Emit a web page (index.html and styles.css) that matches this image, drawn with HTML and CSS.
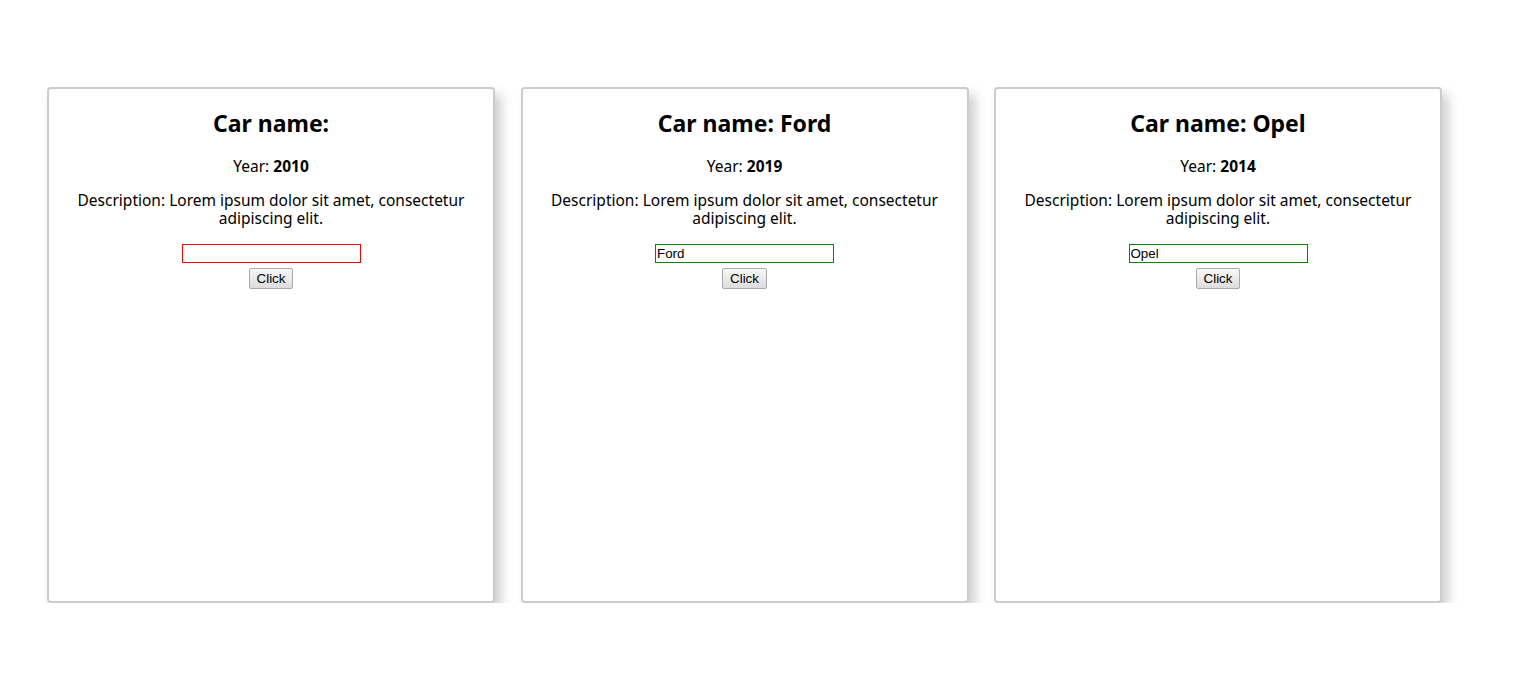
FILE: index.html
```html
<!DOCTYPE html>
<html>
<head>
<meta charset="utf-8">
<link rel="stylesheet" href="styles.css">
</head>
<body>
<div class="cards">
  <div class="card">
    <h2 class="title">Car name: </h2>
    <p class="line">Year: <b>2010</b></p>
    <p class="line">Description: Lorem ipsum dolor sit amet, consectetur adipiscing elit.</p>
    <div class="form">
      <input class="field field-bad" type="text" value="">
      <button class="btn">Click</button>
    </div>
  </div>
  <div class="card">
    <h2 class="title">Car name: Ford</h2>
    <p class="line">Year: <b>2019</b></p>
    <p class="line">Description: Lorem ipsum dolor sit amet, consectetur adipiscing elit.</p>
    <div class="form">
      <input class="field field-ok" type="text" value="Ford">
      <button class="btn">Click</button>
    </div>
  </div>
  <div class="card">
    <h2 class="title">Car name: Opel</h2>
    <p class="line">Year: <b>2014</b></p>
    <p class="line">Description: Lorem ipsum dolor sit amet, consectetur adipiscing elit.</p>
    <div class="form">
      <input class="field field-ok" type="text" value="Opel">
      <button class="btn">Click</button>
    </div>
  </div>
</div>
</body>
</html>
```

FILE: styles.css
```css
html, body {
  margin: 0;
  padding: 0;
  background: #fff;
}
body {
  font-family: "Noto Sans", "DejaVu Sans", sans-serif;
  color: #000;
}
.cards {
  display: flex;
  gap: 25.5px;
  padding: 87px 0 0 47px;
}
.card {
  box-sizing: border-box;
  flex: 0 0 448px;
  height: 516px;
  border: 2px solid #ccc;
  border-radius: 4px;
  box-shadow: 6px 7px 12px rgba(0, 0, 0, 0.2);
  text-align: center;
  padding: 0 24px;
  background: #fff;
}
.title {
  font-size: 23px;
  line-height: 28px;
  font-weight: 700;
  margin: 20px 0 20px;
}
.line {
  font-size: 15.5px;
  line-height: 18px;
  margin: 16px 0;
}
.line b {
  font-weight: 700;
}
.form {
  display: flex;
  flex-direction: column;
  align-items: center;
  gap: 5px;
  margin-top: 17px;
}
.field {
  box-sizing: border-box;
  width: 179px;
  height: 19px;
  padding: 0 1px;
  margin: 0;
  font-family: "Liberation Sans", Arial, sans-serif;
  font-size: 13.33px;
  color: #000;
  outline: none;
  border-radius: 0;
  background: #fff;
}
.field-bad {
  border: 1px solid #f00;
}
.field-ok {
  border: 1px solid #080;
}
.btn {
  box-sizing: border-box;
  height: 21px;
  padding: 0 7px;
  margin: 0;
  font-family: "Liberation Sans", Arial, sans-serif;
  font-size: 13.33px;
  color: #000;
  background: linear-gradient(#f8f8f8, #dddddd);
  border: 1px solid #a9a9a9;
  border-radius: 2px;
}
```
